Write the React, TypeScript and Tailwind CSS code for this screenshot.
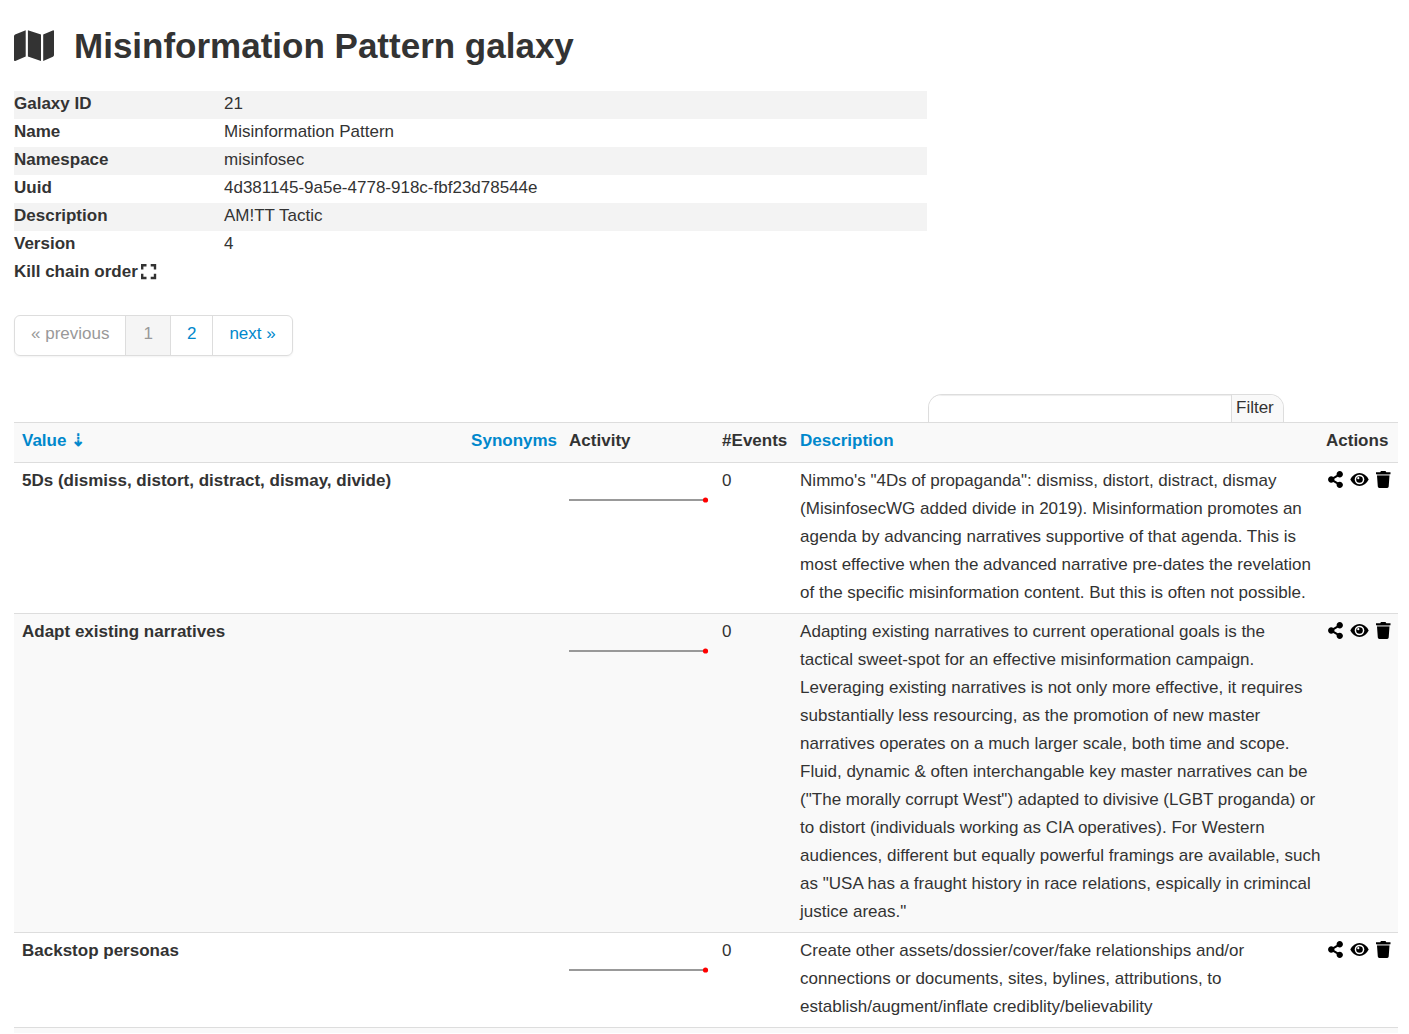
import type { ReactNode } from 'react';
import { FaShareAlt } from 'react-icons/fa';

interface Cluster {
  value: string;
  events: number;
  description: string;
}

const details: { label: string; value: string }[] = [
  { label: 'Galaxy ID', value: '21' },
  { label: 'Name', value: 'Misinformation Pattern' },
  { label: 'Namespace', value: 'misinfosec' },
  { label: 'Uuid', value: '4d381145-9a5e-4778-918c-fbf23d78544e' },
  { label: 'Description', value: 'AM!TT Tactic' },
  { label: 'Version', value: '4' },
];

const clusters: Cluster[] = [
  {
    value: '5Ds (dismiss, distort, distract, dismay, divide)',
    events: 0,
    description:
      'Nimmo\'s "4Ds of propaganda": dismiss, distort, distract, dismay (MisinfosecWG added divide in 2019). Misinformation promotes an agenda by advancing narratives supportive of that agenda. This is most effective when the advanced narrative pre-dates the revelation of the specific misinformation content. But this is often not possible.',
  },
  {
    value: 'Adapt existing narratives',
    events: 0,
    description:
      'Adapting existing narratives to current operational goals is the tactical sweet-spot for an effective misinformation campaign. Leveraging existing narratives is not only more effective, it requires substantially less resourcing, as the promotion of new master narratives operates on a much larger scale, both time and scope. Fluid, dynamic & often interchangable key master narratives can be ("The morally corrupt West") adapted to divisive (LGBT proganda) or to distort (individuals working as CIA operatives). For Western audiences, different but equally powerful framings are available, such as "USA has a fraught history in race relations, espically in crimincal justice areas."',
  },
  {
    value: 'Backstop personas',
    events: 0,
    description:
      'Create other assets/dossier/cover/fake relationships and/or connections or documents, sites, bylines, attributions, to establish/augment/inflate crediblity/believability',
  },
];

export default function App() {
  return (
    <div className="pt-6 pl-[14px] pr-[11px] bg-white text-[#333] text-[17px] leading-7 font-['Liberation_Sans',Arial,sans-serif]">
      <h1 className="flex items-center gap-5 h-11 text-[35px] font-bold">
        <MapIcon />
        Misinformation Pattern galaxy
      </h1>

      <GalaxyDetails />
      <Pagination />
      <FilterBar />
      <ClusterTable />
    </div>
  );
}

function GalaxyDetails() {
  return (
    <table className="mt-[23px] w-[66%]">
      <tbody>
        {details.map(row => (
          <tr key={row.label} className="odd:bg-[#f3f3f3]">
            <th scope="row" className="w-[210px] h-7 p-0 pb-[2px] text-left leading-[26px] font-bold">{row.label}</th>
            <td className="h-7 p-0 pb-[2px] leading-[26px]">{row.value}</td>
          </tr>
        ))}
        <tr>
          <th scope="row" colSpan={2} className="h-7 p-0 pb-[2px] text-left leading-[26px] font-bold">
            <span className="flex items-center gap-[2px]">
              Kill chain order
              <button type="button" aria-label="Expand kill chain order" className="pb-[2px]">
                <ExpandIcon />
              </button>
            </span>
          </th>
        </tr>
      </tbody>
    </table>
  );
}

function Pagination() {
  return (
    <nav className="mt-7 h-[41px]" aria-label="Pages">
      <ul className="inline-flex h-[41px] border border-[#ddd] rounded-md divide-x divide-[#ddd] overflow-hidden shadow-xs leading-9 text-[#0088cc]">
        <li className="px-4 text-[#999]">« previous</li>
        <li className="px-[17px] text-[#999] bg-[#f5f5f5]" aria-current="page">1</li>
        <li><a href="#page-2" className="block px-4">2</a></li>
        <li><a href="#page-2" className="block px-4">next »</a></li>
      </ul>
    </nav>
  );
}

function FilterBar() {
  return (
    <form className="flex justify-end mt-[38px] pr-[114px]">
      <div className="flex w-[356px] h-7 border border-b-0 border-[#ddd] rounded-t-[14px] overflow-hidden">
        <input
          type="text"
          aria-label="Filter value"
          className="flex-1 min-w-0 px-2 bg-white shadow-[inset_0_1px_1px_rgba(0,0,0,0.075)] outline-none"
        />
        <button type="button" className="w-[52px] pl-1 pb-[2px] border-l border-[#ddd] bg-[#f9f9f9] text-left leading-6">
          Filter
        </button>
      </div>
    </form>
  );
}

function HeaderCell({ children }: { children: ReactNode }) {
  return <th scope="col" className="pl-2 pt-1 pb-[7px] text-left font-bold">{children}</th>;
}

function ClusterTable() {
  return (
    <table className="w-full table-fixed">
      <colgroup>
        <col />
        <col className="w-[98px]" />
        <col className="w-[153px]" />
        <col className="w-[78px]" />
        <col className="w-[38%]" />
        <col className="w-[80px]" />
      </colgroup>
      <thead>
        <tr className="border-t border-[#ddd] bg-[#f9f9f9]">
          <HeaderCell><a href="#sort-value" className="text-[#0088cc]">Value ⇣</a></HeaderCell>
          <HeaderCell><a href="#sort-synonyms" className="text-[#0088cc]">Synonyms</a></HeaderCell>
          <HeaderCell>Activity</HeaderCell>
          <HeaderCell>#Events</HeaderCell>
          <HeaderCell><a href="#sort-description" className="text-[#0088cc]">Description</a></HeaderCell>
          <HeaderCell>Actions</HeaderCell>
        </tr>
      </thead>
      <tbody>
        {clusters.map(cluster => (
          <ClusterRow key={cluster.value} cluster={cluster} />
        ))}
      </tbody>
      <tfoot>
        <tr className="border-t border-[#ddd] bg-[#f9f9f9]">
          <td colSpan={6} className="h-[5px] p-0" />
        </tr>
      </tfoot>
    </table>
  );
}

function ClusterRow({ cluster }: { cluster: Cluster }) {
  return (
    <tr className="border-t border-[#ddd] even:bg-[#f9f9f9] align-top">
      <td className="px-2 pt-1 pb-[6px] font-bold">{cluster.value}</td>
      <td />
      <td className="px-2 pt-[34px]"><Sparkline /></td>
      <td className="px-2 pt-1">{cluster.events}</td>
      <td className="pl-2 pt-1 pb-[6px]">
        {/* long lines may run slightly into the actions gutter */}
        <p className="-mr-1">{cluster.description}</p>
      </td>
      <td className="pt-1 pl-[9px]">
        <div className="flex items-center gap-[6px] h-7 pb-1 text-black">
          <button type="button" aria-label="Share"><FaShareAlt className="size-[17px]" /></button>
          <button type="button" aria-label="View"><EyeIcon /></button>
          <button type="button" aria-label="Delete"><TrashIcon /></button>
        </div>
      </td>
    </tr>
  );
}

function Sparkline() {
  return (
    <svg className="block" width="140" height="6" viewBox="0 0 140 6">
      <path d="M0 3H137" stroke="#999" strokeWidth="2" />
      <circle cx="136.5" cy="3" r="2.6" fill="red" />
    </svg>
  );
}

function MapIcon() {
  return (
    <svg className="shrink-0" width="40" height="32" viewBox="0 0 40 32" fill="currentColor" aria-hidden="true">
      <path d="M0 6.2Q0 5 1.1 4.5L11.7.3V26.6L1.3 30.9Q0 31.4 0 30ZM13.9.3L27 4.5V30.9L13.9 26.6ZM29.2 4.5L38.7.5Q40 0 40 1.3V25Q40 26.2 38.9 26.7L29.2 30.9Z" />
    </svg>
  );
}

function ExpandIcon() {
  return (
    <svg className="block" width="17" height="17" viewBox="0 0 17 17" fill="none" stroke="currentColor" strokeWidth="2.4" aria-hidden="true">
      <path d="M2.2 6.5V2.2H6.5M10.7 2.2H15V6.5M15 10.7V15H10.7M6.5 15H2.2V10.7" />
    </svg>
  );
}

function EyeIcon() {
  return (
    <svg className="block" width="19" height="17" viewBox="0 0 19 17" aria-hidden="true">
      <path d="M.3 8.5Q3.7 2 9.5 2T18.7 8.5Q15.3 15 9.5 15T.3 8.5Z" fill="currentColor" />
      <circle cx="9.5" cy="8.5" r="4.8" fill="white" />
      <circle cx="9.5" cy="8.5" r="3.3" fill="currentColor" />
      <circle cx="8.3" cy="7.2" r="1.1" fill="white" />
    </svg>
  );
}

function TrashIcon() {
  return (
    <svg className="block" width="17" height="17" viewBox="0 0 17 17" fill="currentColor" aria-hidden="true">
      <path d="M1 1.2H5.2L6 0H10.5L11.3 1.2H15.5V3.2H1ZM2 4.4H14.5L13.7 15.6Q13.6 17 12.2 17H4.3Q2.9 17 2.8 15.6Z" />
      <path d="M2 3.2H14.5V4.4H2Z" opacity="0.35" />
    </svg>
  );
}
